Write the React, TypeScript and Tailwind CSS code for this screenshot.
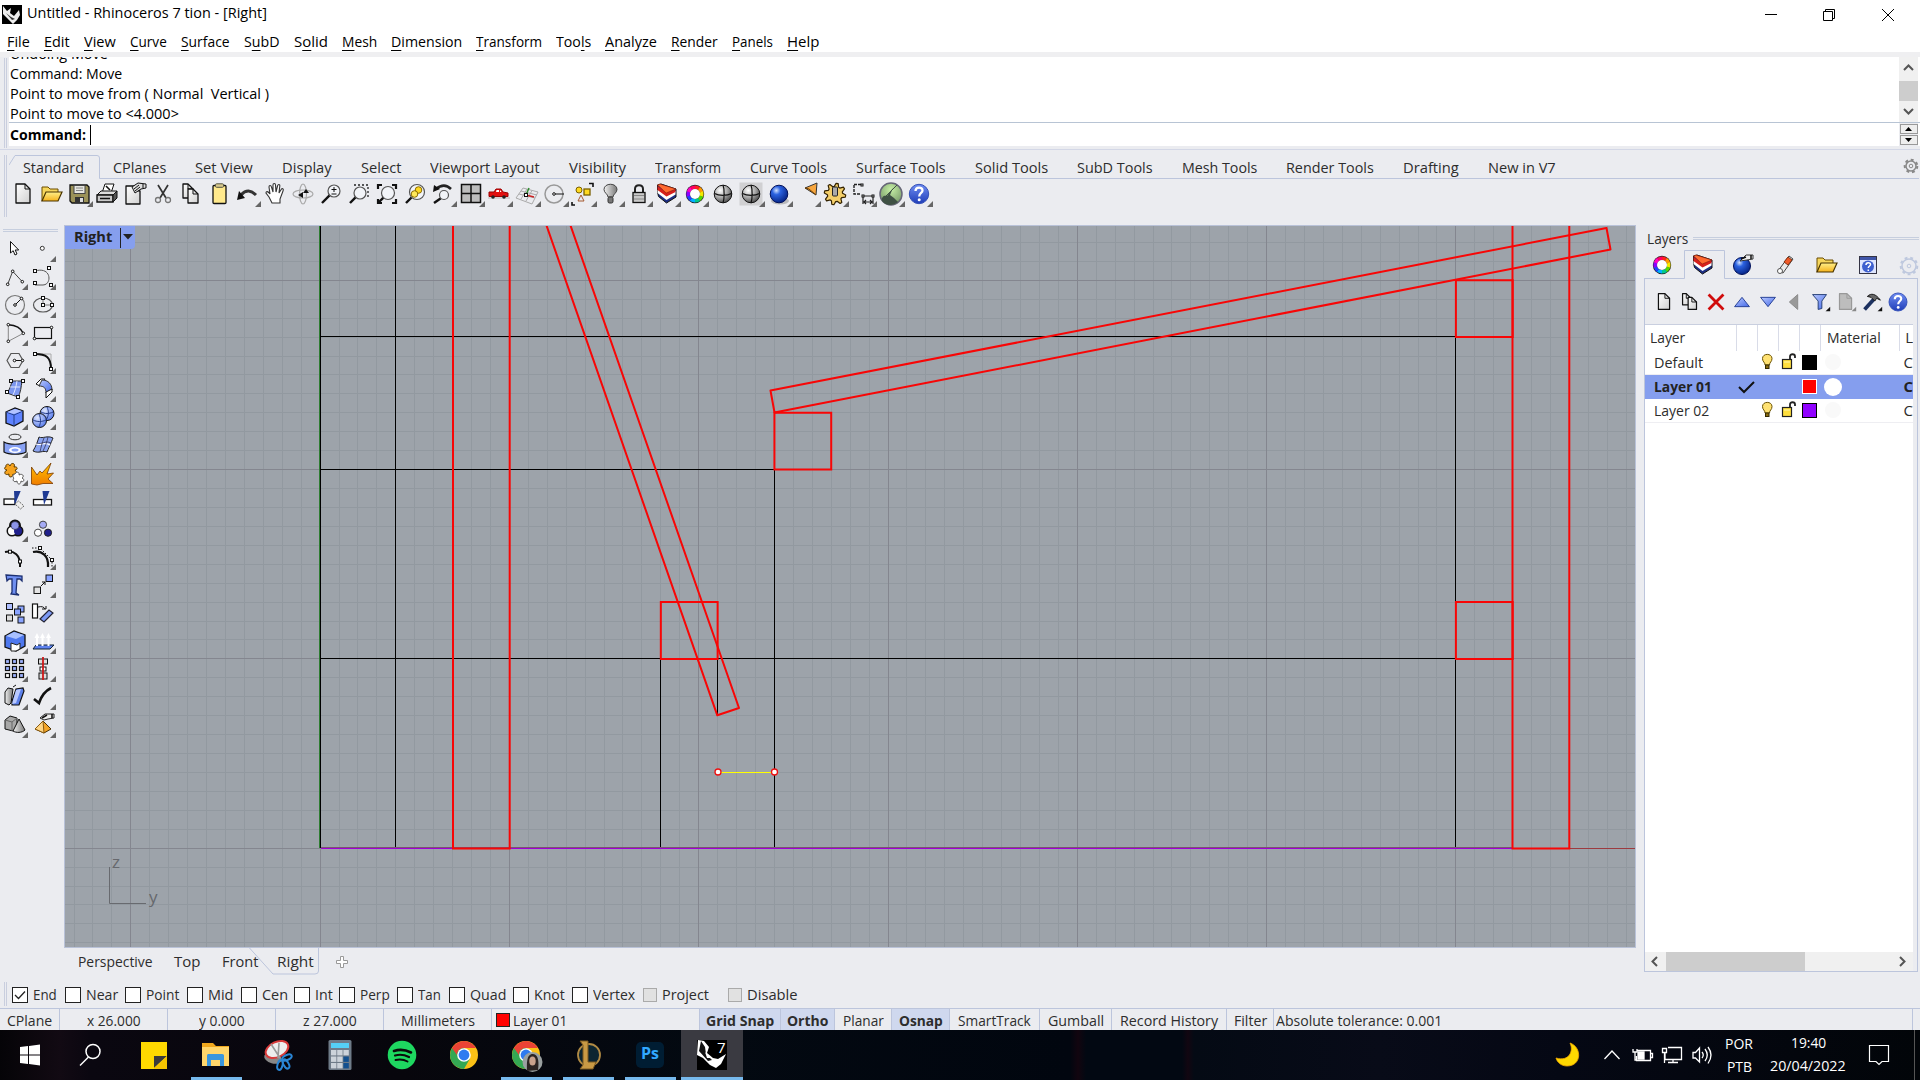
import React, { useLayoutEffect, useRef, useState } from "react";

/* Text squeezed to a given advance width, as the narrower system face would set it. */
function Fit({ w, className = "", children }: { w: number; className?: string; children: React.ReactNode }) {
  const ref = useRef<HTMLSpanElement>(null);
  const [s, setS] = useState(1);
  useLayoutEffect(() => {
    if (ref.current && ref.current.offsetWidth) setS(w / ref.current.offsetWidth);
  }, [w]);
  return (
    <span className="inline-block shrink-0 whitespace-pre" style={{ width: w }}>
      <span ref={ref} className={"inline-block origin-left " + className} style={{ transform: `scaleX(${s})` }}>
        {children}
      </span>
    </span>
  );
}

const K = "#111";
const P = ({ d, f = "none", s = K, w = 1, ...r }: any) => <path d={d} fill={f} stroke={s} strokeWidth={w} {...r} />;
const Sq = ({ x, y, z = 3, f = "#fff" }: any) => (
  <rect x={x - z / 2} y={y - z / 2} width={z} height={z} fill={f} stroke={K} />
);
const Dot = ({ x, y }: any) => <circle cx={x} cy={y} r={1.3} fill="#fff" stroke={K} />;
const Fly = ({ c = "#666" }: any) => <path d="M28 21V27H22Z" fill={c} />;

function Cell({ children, fly, size = 28 }: { children: React.ReactNode; fly?: boolean; size?: number }) {
  return (
    <svg width={size} height={28} viewBox="0 0 28 28" className="shrink-0 overflow-visible">
      {children}
      {fly && <Fly />}
    </svg>
  );
}

function Defs() {
  return (
    <svg className="absolute h-0 w-0">
      <defs>
        <linearGradient id="page" x1="0" y1="0" x2="1" y2="1"><stop offset="0" stopColor="#fff" /><stop offset="1" stopColor="#d0d0d0" /></linearGradient>
        <linearGradient id="gold" x1="0" y1="0" x2="0" y2="1"><stop offset="0" stopColor="#fff08a" /><stop offset="1" stopColor="#f5b21c" /></linearGradient>
        <linearGradient id="fire" x1="0" y1="0" x2="0" y2="1"><stop offset="0" stopColor="#ffc400" /><stop offset="1" stopColor="#f07c00" /></linearGradient>
        <linearGradient id="blue" x1="0" y1="0" x2="1" y2="1"><stop offset="0" stopColor="#b9c9ff" /><stop offset="1" stopColor="#4469e8" /></linearGradient>
        <radialGradient id="bball" cx=".35" cy=".3" r=".8"><stop offset="0" stopColor="#cfe0ff" /><stop offset=".3" stopColor="#2b62e0" /><stop offset="1" stopColor="#001a78" /></radialGradient>
        <radialGradient id="lball" cx=".35" cy=".3" r=".8"><stop offset="0" stopColor="#dfe8ff" /><stop offset="1" stopColor="#4a70ea" /></radialGradient>
        <radialGradient id="gball" cx=".35" cy=".3" r=".8"><stop offset="0" stopColor="#fff" /><stop offset=".5" stopColor="#a8a8a8" /><stop offset="1" stopColor="#3c3c3c" /></radialGradient>
        <radialGradient id="green" cx=".5" cy=".3" r=".8"><stop offset="0" stopColor="#c5efa5" /><stop offset="1" stopColor="#6b8b5f" /></radialGradient>
        <linearGradient id="help" x1="0" y1="0" x2="0" y2="1"><stop offset="0" stopColor="#6f8df2" /><stop offset="1" stopColor="#1f3db8" /></linearGradient>
        <linearGradient id="grey" x1="0" y1="0" x2="1" y2="0"><stop offset="0" stopColor="#f2f2f2" /><stop offset="1" stopColor="#777" /></linearGradient>
      </defs>
    </svg>
  );
}

const Page = ({ x = 7, y = 4, w = 14, h = 19, f = "url(#page)", s = K }: any) => (
  <>
    <path d={`M${x} ${y}h${w - 5}l5 5v${h - 5}h-${w}Z`} fill={f} stroke={s} strokeWidth={1.3} strokeLinejoin="round" />
    <path d={`M${x + w - 5} ${y}v5h5`} fill="none" stroke={s} />
  </>
);
const Folder = () => (
  <>
    <P d="M5 21V7H11L13 9H21V12" f="#f6d65c" s="#6b4d00" />
    <P d="M5 21L9 12H25L21 21Z" f="url(#gold)" s="#4a3500" w={1.2} />
  </>
);
const Wheel = () => {
  const cs = ["#ff2020", "#ff9a00", "#f5e800", "#55d800", "#00c890", "#00b0ff", "#2040ff", "#8a00ff", "#ff00c8", "#ff0060"];
  return (
    <>
      <circle cx="14" cy="14" r="9.2" fill="#222" />
      {cs.map((c, i) => {
        const a = ((i * 36 - 90) * Math.PI) / 180, b = (((i + 1) * 36 - 88) * Math.PI) / 180;
        return <path key={c} fill="none" stroke={c} strokeWidth="3.6" d={`M${14 + 6.8 * Math.cos(a)} ${14 + 6.8 * Math.sin(a)}A6.8 6.8 0 0 1 ${14 + 6.8 * Math.cos(b)} ${14 + 6.8 * Math.sin(b)}`} />;
      })}
      <circle cx="14" cy="14" r="5" fill="#fff" />
    </>
  );
};
const LayerIcon = () => (
  <>
    <path d="M4.500 5V12L5.500 16.500L13.500 23L23 17V9L8 4Z" fill="#1c2f86" stroke="#111" />
    <path d="M4.500 10V13L13.500 20L22.500 14.500V11Z" fill="#fff" />
    <path d="M4.500 6V10L13.500 16.500L22.500 12V9.500L13 12Z" fill="#d6201c" />
    <path d="M4.500 5L7 4L23 9L13.200 13Z" fill="#ff6a30" stroke="#8a1a08" strokeWidth=".6" />
  </>
);
const Mag = ({ x = 17, y = 11, r = 6 }: any) => (
  <>
    <P d={`M${x - r * 0.7} ${y + r * 0.7}L5 23`} w={2.4} />
    <circle cx={x} cy={y} r={r} fill="#f4f6fa" fillOpacity=".8" stroke="#555" strokeWidth="1.2" />
  </>
);
const Help = () => (
  <>
    <circle cx="14" cy="14" r="9.7" fill="url(#help)" stroke="#3450b8" />
    <P d="M10.500 11C10.500 6.500 17.500 6.500 17.500 10.500C17.500 13 14.200 13 14.200 16.500" s="#fff" w={2.3} />
    <circle cx="14.200" cy="19.800" r="1.500" fill="#fff" />
  </>
);
const Ball = ({ f = "url(#gball)" }: any) => (
  <>
    <circle cx="14" cy="14" r="8.800" fill={f} stroke={K} />
    <P d="M5.500 13.500C10 16 18 16 22.500 13.500M14 5C15.500 9 15.500 19 14 23" w={1.2} />
  </>
);
const Gear = ({ s = "#888", f = "none", r = 6 }: any) => (
  <>
    <circle cx="14" cy="14" r={r} fill={f} stroke={s} strokeWidth="1.500" />
    <circle cx="14" cy="14" r={r + 1.3} fill="none" stroke={s} strokeWidth="2" strokeDasharray="2.900 2.830" />
    <circle cx="14" cy="14" r="1.800" fill="none" stroke={s} />
  </>
);
/* Yellow cog built from eight teeth around a disc. */
const Cog = () => {
  const pts = Array.from({ length: 32 }, (_, i) => {
    const r = i % 4 < 2 ? 10.8 : 7.6, a = (i * Math.PI) / 16 + 0.1;
    return `${(14 + r * Math.cos(a)).toFixed(1)} ${(14 + r * Math.sin(a)).toFixed(1)}`;
  });
  return (
    <>
      <path d={"M" + pts.join("L") + "Z"} fill="#f4cf6a" stroke="#332200" strokeWidth="1.200" strokeLinejoin="round" />
      <rect x="11.500" y="7" width="5" height="9" rx="1" fill="#aaa" stroke="#222" />
    </>
  );
};

const toolbar: [React.ReactNode, boolean][] = [
  [<Page />, false],
  [<Folder />, false],
  [<><P d="M5 5H22L24 7V23H7L5 21Z" f="#9b9258" w={1.300} /><rect x="9" y="5.500" width="11" height="8" fill="#e6e6e0" stroke="#444" /><rect x="10" y="17" width="9" height="6" fill="#333" /><rect x="15" y="18" width="3" height="4" fill="#ddd" /><P d="M11 8H18M11 10.500H18" s="#888" /></>, true],
  [<><P d="M9 13L12 4H21L18 13Z" f="#fff" /><P d="M4 15L8 11H24L21 15Z" f="#ddd" /><P d="M4 15H20V22H4Z" f="#c9c9c9" w={1.400} /><P d="M20 15L24 11V18L20 22Z" f="#555" /><P d="M7 18.500H17M13 6L17 10" w={1.600} /></>, false],
  [<><Page x={5} y={6} w={14} h={18} /><P d="M11 7L17 3L25 4V8L20 9L14 13Z" f="#ddd" /><P d="M13 9L18 5M14 11L19 7M22 4V8" /></>, false],
  [<><P d="M9 5L17 18M19 5L11 18" s="#333" w={1.700} /><circle cx="9" cy="20" r="2.500" fill="none" stroke="#777" strokeWidth="1.300" /><circle cx="19" cy="20" r="2.500" fill="none" stroke="#777" strokeWidth="1.300" /></>, false],
  [<><Page x={6} y={4} w={10} h={14} /><Page x={11} y={9} w={10} h={14} /></>, false],
  [<><rect x="8" y="5.500" width="13" height="18" rx="1" fill="#ffe98c" stroke={K} strokeWidth="1.300" /><rect x="10.500" y="3.800" width="8" height="3.500" rx="1" fill="#d8c98c" stroke="#554" /></>, false],
  [<><P d="M8 15C13 9.500 18 10 23 15" w={3} s="#333" /><path d="M4 20L6 11L12 18Z" fill="#111" /></>, true],
  [<><P d="M8 17L5 13C5 11 7 11 9 14L8 7C8 5 10 5 10.500 7L12 12L12 5C12 3 14.500 3 14.500 5L15 12L16.500 6C17 4 19 4 18.800 6L18 13L20.500 9C21.500 8 23 9 22 11L19 19V23H11Z" f="#fff" s="#333" w={1.100} /></>, false],
  [<><ellipse cx="14" cy="14" rx="10" ry="4" fill="none" stroke="#aaa" strokeWidth="1.200" /><ellipse cx="14" cy="14" rx="3.500" ry="10" fill="none" stroke="#aaa" strokeWidth="1.200" /><path d="M17 9L20 13H14ZM9 15L14 12V18Z" fill="#111" /></>, false],
  [<><Mag /><P d="M14.500 9.500H19.500M17 7V12M14.500 14H19.500" /></>, false],
  [<><P d="M9 5H23V19" s="#222" strokeDasharray="2 2" w={1.300} /><Mag x={15} y={13} r={6} /></>, false],
  [<><P d="M5 9V5H9M19 5H23V9M5 19V23H9M19 23H23V19" w={2.200} /><Mag x={15} y={13} r={6.500} /></>, false],
  [<><Mag x={16} y={12} r={7.500} /><circle cx="17.500" cy="10" r="3.300" fill="#ffd91f" stroke="#8a6a00" /><circle cx="13.500" cy="14" r="3.300" fill="#ffe85a" stroke="#8a6a00" /></>, false],
  [<><P d="M7 9C13 4 18 5 22 9" w={2.600} s="#222" /><path d="M4 12L5 5L11 9Z" fill="#111" /><Mag x={15} y={15} r={4.500} /></>, true],
  [<><rect x="4.500" y="4.500" width="19" height="18" fill="#bdbdbd" stroke={K} strokeWidth="1.500" /><P d="M14 4V23M4 13.500H24" w={1.500} /></>, true],
  [<><P d="M3 18H25" s="#bbb" /><P d="M4 16V12L9 12L11 9H16L18 12L23 13V16.500H4Z" f="#e21010" s="#9a0000" /><path d="M11.500 10H14V12H11ZM15 10L16.500 12H15Z" fill="#fff" /><circle cx="8" cy="17" r="1.800" fill="#222" /><circle cx="19" cy="17" r="1.800" fill="#222" /></>, true],
  [<><P d="M3 18L10 8L25 12L19 24ZM6 14L22 18M8 11L24 15M8 19L14 9M13 21L19 10.500" s="#aaa" /><P d="M13 15L16 8" s="#2a8a2a" w={1.500} /><P d="M13 15L21 17" s="#c22" w={1.500} /><Sq x={13} y={15} /></>, true],
  [<><circle cx="13" cy="14" r="9" fill="none" stroke="#999" strokeWidth="1.500" /><P d="M13 14H23" /><Dot x={13} y={14} /></>, true],
  [<><circle cx="10" cy="10" r="3" fill="#ffd91f" stroke="#7a6000" /><rect x="15" y="9" width="6" height="6" fill="#ffd91f" stroke="#7a6000" strokeWidth="1.300" /><P d="M12 15L15 21H9Z" s="#a55a30" /><P d="M20 3.500H24V7M3 22V25H6" w={1.600} /></>, true],
  [<><P d="M11 17C11 14 7 13 7 9.500C7 2.500 20 2.500 20 9.500C20 13 16 14 16 17Z" f="url(#grey)" s="#444" /><rect x="11" y="17" width="5" height="6" rx="1.500" fill="#777" stroke="#333" /></>, true],
  [<><P d="M10 13V9C10 4 18 4 18 9V13" s="#222" w={2} /><rect x="8" y="12.500" width="12" height="10" fill="#c9c9c9" stroke={K} strokeWidth="1.300" /><P d="M9 15.500H19M9 19H19" s="#888" /></>, true],
  [<LayerIcon />, true],
  [<Wheel />, true],
  [<Ball />, false],
  [<><rect x="2.500" y="2.500" width="23" height="23" fill="#d0d0d2" /><Ball /></>, true],
  [<><ellipse cx="15" cy="21" rx="9" ry="3.500" fill="#999" opacity=".6" /><circle cx="14" cy="14" r="8.800" fill="url(#bball)" stroke="#00105a" /></>, true],
  [<><P d="M12 8L24 3L23 15Z" f="#f7a63e" s="#333" /><P d="M12 8L16 9L23 15" s="#704000" /></>, true],
  [<Cog />, true],
  [<><P d="M5 5V14H11M5 4.500H13" s="#222" strokeDasharray="3 1" w={1.400} /><P d="M14 16V24M24 16V24M15 22H23M17 20L15 22L17 24M21 20L23 22L21 24M14 16H23" s="#222" w={1.200} /><Sq x={13} y={5} z={2} /><Sq x={14} y={16} z={2} /><Sq x={24} y={16} z={2} /></>, true],
  [<><circle cx="14" cy="14" r="11" fill="url(#green)" stroke="#667" strokeWidth="1.500" /><path d="M5 21C4 17 7 15 10 16L16 8L13 15L17 18L21 22C16 26 9 26 5 21Z" fill="#3f5144" /><P d="M9 16L20 5" s="#3f5144" /></>, true],
  [<Help />, true],
];

const sidebar: [React.ReactNode, boolean][] = [
  [<P d="M10.500 6.500V18L13.200 15.700L15 20L17 19L15.200 15H18.700Z" f="#fff" />, false],
  [<circle cx="14.300" cy="13.300" r="2" fill="#fff" stroke="#333" />, true],
  [<><P d="M7.700 21.300L12.700 8.300L22.300 18.700" s="#444" /><Dot x={7.700} y={21.300} /><Dot x={12.700} y={8.300} /><Dot x={22.300} y={18.700} /></>, true],
  [<><P d="M7 8C24 3 24 22 15 22H7" s="#555" /><Sq x={7} y={8} /><Sq x={21} y={5} /><Sq x={7} y={20} /><Sq x={23} y={22} /></>, true],
  [<><circle cx="15" cy="14" r="9.500" fill="none" stroke="#777" strokeWidth="1.200" /><P d="M15 14L21.500 7.500" /><Dot x={15} y={14} /><Dot x={21.500} y={7.500} /></>, true],
  [<><ellipse cx="15" cy="14" rx="9.500" ry="7" fill="none" stroke="#555" strokeWidth="1.200" /><P d="M15 7V14H24" s="#777" /><Sq x={15} y={7} /><Sq x={15} y={14} /><Sq x={24} y={14} /></>, true],
  [<><P d="M8.300 5.700V22.300L23.300 14.300" s="#888" /><P d="M8.300 5.700C16 6 21 9 23.300 14.300" w={1.400} /><Dot x={8.300} y={5.700} /><Dot x={8.300} y={22.300} /><Dot x={23.300} y={14.300} /></>, true],
  [<><rect x="6.500" y="8.500" width="17" height="11" fill="none" stroke={K} strokeWidth="1.200" /><Dot x={6.500} y={19.500} /><Dot x={23.500} y={8.500} /></>, true],
  [<><P d="M7 13.500L11 6.500H19L23 13.500L19 20.500H11Z" s="#555" w={1.200} /><P d="M14 13.500H22.500" /><Dot x={14.500} y={13.500} /><Dot x={22.500} y={13.500} /></>, true],
  [<><P d="M7 7H23V22" s="#aaa" /><P d="M7 7C18 7 23 10 23 22" w={2} /><Sq x={7} y={7} /><Sq x={23} y={22} /></>, true],
  [<><P d="M12 6L22 6C21 12 21 17 18 22L7 18C10 14 11 10 12 6Z" f="#7d97ee" s="#333" /><P d="M17 6C16 12 15 16 13 20M10 12H20" s="#dfe6ff" /><Sq x={11} y={6} /><Sq x={23} y={6} /><Sq x={7} y={17} /><Sq x={18} y={22} /></>, true],
  [<><P d="M8 9L13 4H17L12 11Z" f="#fff" /><P d="M14 5C20 5 24 9 24 15L18 18C18 13 16 11 11 11Z" f="url(#blue)" s="#333" /><P d="M18 17L24 14V17L18 23Z" f="#fff" /></>, true],
  [<><P d="M6 9L15 5L23 8V18L14 23L6 20Z" f="#5f83ff" w={1.300} /><P d="M6 9L14 12L23 8M14 12V23" s="#24408c" /><path d="M7 9L15 6L22 8L14 11Z" fill="#b3c3ff" /></>, true],
  [<><circle cx="19" cy="10.500" r="7" fill="url(#lball)" stroke={K} /><circle cx="11.500" cy="17.500" r="7" fill="url(#lball)" stroke={K} /><P d="M5 17C9 19 14 19 18 17M11 11C13 15 13 20 11 24M13 9C17 11 21 11 25 9M19 4C21 8 21 13 18 17" s="#223a8a" /></>, true],
  [<><ellipse cx="15" cy="6" rx="6" ry="2.800" fill="none" stroke="#333" /><P d="M4 11C9 14 21 14 26 11V21C21 24 9 24 4 21Z" f="#88a2f5" w={1.200} /><ellipse cx="15" cy="19" rx="6" ry="3" fill="#fff" /><ellipse cx="15" cy="19" rx="3.500" ry="1.500" fill="#88a2f5" /></>, true],
  [<><P d="M11 6C15 8 19 4 25 7C23 12 22 14 19 21C15 19 11 23 5 20C8 15 9 12 11 6Z" f="#8aa3f0" s="#222" /><P d="M8 13C13 15 17 10 22 14" s="#fff" w={1.300} /><P d="M16 7C14 12 13 16 12 21M20 6C19 11 17 16 15 20M9 12C14 14 17 9 23 12" s="#335" w={.8} /></>, true],
  [<><P d="M6 8C5 5 9 4 10 7C11 3 16 4 14 8C18 7 18 11 15 11C18 14 16 17 13 15C13 19 8 19 9 15C5 17 3 13 7 11C4 11 4 8 6 8Z" f="#f5a21d" s="#5a3a00" /><P d="M15 15C16 12 20 13 19 16C22 14 25 17 22 19C25 20 24 24 21 22C21 26 17 26 17 22C14 24 12 21 14 19C12 18 13 15 15 15Z" f="#fff" s="#555" /></>, true],
  [<path d="M3.500 25V8L9 16L12 12L14 14L23 4L19 15L25.500 14L20 20L25 24.500H15L9 26Z" fill="url(#fire)" stroke="#7a3b00" strokeWidth=".8" />, false],
  [<><rect x="4" y="12" width="11" height="5.500" fill="#fff" stroke={K} strokeWidth="1.300" /><path d="M14 4H20.700L14.700 18Z" fill="#1f3a93" /><P d="M15 17L18.500 14L24 19L20.500 22Z" f="#eee" s="#666" strokeDasharray="2 1" /></>, false],
  [<><rect x="5.500" y="12.500" width="18" height="5.500" fill="#fff" stroke={K} strokeWidth="1.300" /><path d="M14.500 4H21.500L16 18Z" fill="#1f3a93" /></>, false],
  [<><g stroke={K} strokeWidth="3"><circle cx="15" cy="10.500" r="4.500" /><circle cx="12" cy="16" r="4" /><circle cx="18" cy="16" r="4" /></g><circle cx="12" cy="16" r="4" fill="#fff" /><circle cx="18" cy="16" r="4" fill="#20208c" /><circle cx="15" cy="10.500" r="4" fill="#8d95e8" stroke="#223" strokeWidth=".6" /></>, true],
  [<><circle cx="15" cy="9.700" r="3.600" fill="#a5abf5" stroke="#444" /><circle cx="10" cy="17.700" r="3.600" fill="#fff" stroke="#444" /><circle cx="20" cy="17.700" r="3.600" fill="#20208c" stroke="#222" /></>, false],
  [<><P d="M5 9C14 7 21 12 20 24" w={2} /><Sq x={10} y={8.700} /><Sq x={20} y={18.500} /></>, false],
  [<><P d="M4 5H12L24 17V24" strokeDasharray="1.500 1.500" /><P d="M5 9C14 7 21 13 20 24" w={2.200} /><Sq x={12} y={5} /><Sq x={24} y={17} /></>, true],
  [<P d="M6 4L22 5V10L20 8H17L16 22L19 24L11 23L12 21L12 8H9L7 10Z" f="#6f8ff0" s="#1c2f70" w={1.300} />, false],
  [<><rect x="6" y="16" width="6.500" height="6.500" fill="#e4e4e4" stroke={K} /><rect x="18" y="4" width="6.500" height="6.500" fill="#8aa4ff" stroke={K} /><P d="M13 15L17 11M14 11H17V14" /></>, true],
  [<><rect x="6.500" y="4.500" width="6" height="6" fill="#aebeff" stroke={K} /><rect x="18" y="7" width="6" height="6" fill="#8aa4ff" stroke={K} /><rect x="14.500" y="10" width="6" height="6" fill="#8aa4ff" stroke={K} /><rect x="6.500" y="16" width="6" height="6" fill="#ddd" stroke={K} /><rect x="18" y="18" width="6" height="6" fill="#8aa4ff" stroke={K} /></>, false],
  [<><rect x="4.500" y="5" width="5" height="14" fill="#fff" stroke={K} strokeWidth="1.200" /><P d="M10 8C14 7 16 8 17 10M14 10H18V7" /><P d="M12 20L21 11L25 14L16 23Z" f="#7d9af5" s="#223" w={1.200} /></>, false],
  [<><P d="M5 9L14 4L25 8V19L16 24L5 20Z" f="#4e78ee" w={1.300} /><path d="M6 9L14 5L24 8L16 12Z" fill="#a9c0ff" /><P d="M11 24V16L17 18L20 16V22L16 24Z" f="#fff" s="#222" /></>, true],
  [<><P d="M5 22L8 18H26L22 22Z" f="#5f83f0" s="#123" /><P d="M9 19V9M14.500 19V9M20.500 19V9" s="#fff" w={2} /><path d="M6.500 11L9 6L11.500 11ZM12 11L14.500 6L17 11ZM18 11L20.500 6L23 11Z" fill="#fff" /></>, true],
  [<>{[5.500, 12.500, 19.500].map((y) => [5.500, 12.500, 19.500].map((x) => <rect key={x + "-" + y} x={x} y={y - 1} width="4" height="4" fill={x < 6 && y > 19 ? "#fff" : "#9db2ff"} stroke={K} strokeWidth="1.200" />))}</>, true],
  [<><rect x="10.500" y="4" width="9" height="5" fill="#ddd" stroke={K} /><rect x="12" y="12" width="6" height="4" fill="#fff" stroke={K} /><rect x="11" y="18" width="8" height="6" fill="#ddd" stroke={K} /><P d="M15 2V25" s="#d01818" w={1.800} /></>, true],
  [<><P d="M5 9L8 5L13 6L11 20L9 22L5 20Z" f="url(#grey)" /><P d="M12 18L16 6L23 5L24 8L19 22L12 22Z" f="#5c80ea" w={1.200} /><P d="M16 7L12 21L16 20L21 6Z" f="#b9c9ff" s="none" /><P d="M13 4L16 2" /></>, true],
  [<P d="M6 16L11 20C13 14 17 8 23 5" w={2.600} s="#111" />, true],
  [<><P d="M5 9L10 5L17 7V16L13 20L5 18Z" f="#a8a8a8" /><P d="M5 9L12 11L17 7M12 11V20" s="#666" /><P d="M13 20L19 8L25 19C22 22 16 22 13 20Z" f="url(#grey)" /></>, true],
  [<><P d="M12 7L17 3H26V7L20 8L16 9Z" f="#eee" s="#222" /><P d="M14 7L19 4M24 3V7" w={1.500} /><P d="M7 18L15 10L23 18L16 22Z" f="#f3a528" s="#4a3000" /><P d="M15 10L16 22L7 18Z" f="#ffd583" s="#8a5a10" /></>, true],
];

const menus: [string, number, number][] = [
  ["File", 0, 23], ["Edit", 0, 26], ["View", 0, 32], ["Curve", 0, 37], ["Surface", 0, 49], ["SubD", 1, 36], ["Solid", 1, 34], ["Mesh", 0, 35],
  ["Dimension", 0, 71], ["Transform", 0, 66], ["Tools", 3, 35], ["Analyze", 0, 52], ["Render", 0, 47], ["Panels", 0, 41], ["Help", 0, 32],
];
const tabs: [string, number][] = [
  ["Standard", 61], ["CPlanes", 53], ["Set View", 58], ["Display", 50], ["Select", 40], ["Viewport Layout", 110], ["Visibility", 57], ["Transform", 66],
  ["Curve Tools", 77], ["Surface Tools", 90], ["Solid Tools", 73], ["SubD Tools", 76], ["Mesh Tools", 75], ["Render Tools", 88], ["Drafting", 56], ["New in V7", 68],
];
/* label, label width, distance from this box to the next one */
const osnaps: [string, number, string][] = [
  ["End", 24, "w-[53px]"], ["Near", 32, "w-[60px]"], ["Point", 33, "w-[62px]"], ["Mid", 25, "w-[54px]"], ["Cen", 26, "w-[53px]"], ["Int", 18, "w-[45px]"],
  ["Perp", 30, "w-[58px]"], ["Tan", 23, "w-[52px]"], ["Quad", 36, "w-[64px]"], ["Knot", 31, "w-[59px]"], ["Vertex", 42, "w-[71px]"], ["Project", 47, "w-[85px]"], ["Disable", 51, "w-[85px]"],
];

function TitleBar() {
  return (
    <div className="flex h-6 items-center bg-white pl-[2px] pt-px text-black">
      <svg width="20" height="20" viewBox="0 0 20 20" className="mt-[5px]">
        <rect width="20" height="20" fill="#000" />
        <path d="M1 1L5 6L9 3L8 8L12 11L17 5L18 10L15 15L11 19L5 13L1 9Z" fill="#eee" />
        <path d="M4 8L10 15L13 14L9 12Z" fill="#333" />
      </svg>
      <div className="ml-[5px]"><Fit w={240}>Untitled - Rhinoceros 7 tion - [Right]</Fit></div>
      <svg width="130" height="14" viewBox="0 0 130 14" className="ml-auto mr-[26px] mt-[5px]" fill="none" stroke="#000">
        <path d="M1 6.500H13" /><path d="M59.500 3.500H68.500V12.500H59.500ZM61.500 3V1.500H70.500V10.500H69" /><path d="M118 1L130 13M130 1L118 13" />
      </svg>
    </div>
  );
}

function CommandArea() {
  return (
    <div className="flex h-[93px] border-b border-[#d3d7e6]">
      <div className="my-px ml-1 mr-[2px] w-[3px] border-x border-[#c9cede]" />
      <div className="mb-[3px] flex flex-1 flex-col bg-white text-black">
        <div className="flex h-[66px] overflow-hidden">
          <div className="-mt-[14px] flex flex-1 flex-col pl-px leading-5">
            <Fit w={98}>Undoing Move</Fit><Fit w={112}>Command: Move</Fit><Fit w={259}>Point to move from ( Normal  Vertical )</Fit><Fit w={169}>Point to move to &lt;4.000&gt;</Fit>
          </div>
          <div className="mr-[2px] flex w-[19px] flex-col bg-[#f0f0f0]">
            <svg width="19" height="24"><path d="M5 13L9.500 8.500L14 13" stroke="#555" strokeWidth="2" fill="none" /></svg>
            <div className="h-[21px] bg-[#cdcdcd]" />
            <svg width="19" height="21"><path d="M5 8L9.500 12.500L14 8" stroke="#555" strokeWidth="2" fill="none" /></svg>
          </div>
        </div>
        <div className="flex h-6 items-center border-t border-[#b8c4d4] pl-px">
          <Fit w={76} className="font-bold">Command:</Fit>
          <div className="ml-1 h-[20px] w-px bg-black" />
          <div className="ml-auto mr-[2px] flex h-[23px] w-[19px] flex-col gap-px bg-[#ebecf0] pl-px pt-px">
            <svg width="18" height="10"><rect x=".5" y=".5" width="17" height="9" fill="#eee" stroke="#999" /><path d="M5 7L8.500 3L12 7Z" /></svg>
            <svg width="18" height="10"><rect x=".5" y=".5" width="17" height="9" fill="#eee" stroke="#999" /><path d="M5 3L8.500 7L12 3Z" /></svg>
          </div>
        </div>
      </div>
    </div>
  );
}

function Toolbars() {
  return (
    <div className="flex h-[75px] pt-[5px]">
      <div className="mb-2 ml-1 w-[3px] border-x border-[#c9cede]" />
      <div className="flex flex-1 flex-col">
        <div className="relative flex h-6 items-end">
          <svg width="1910" height="24" className="absolute left-[2px] top-0"><path d="M0 10L6 .5H88Q90.500 .5 90.500 3V23.500H1910" fill="none" stroke="#bcc5dc" /></svg>
          <div className="flex gap-[29px] pl-4 leading-6">{tabs.map(([t, w]) => <Fit key={t} w={w}>{t}</Fit>)}</div>
          <svg width="22" height="22" viewBox="3 3 22 22" className="ml-auto -mr-[2px] mb-[2px]"><Gear r={5} /></svg>
        </div>
        <div className="flex pl-[2px] pt-px">{toolbar.map(([n, f], i) => <Cell key={i} fly={f}>{n}</Cell>)}</div>
      </div>
    </div>
  );
}

/* One model unit is G pixels; the origin is the foot of the green axis. */
const G = 18.93;
const gx = (n: number) => 255.1 + n * G;
const gy = (n: number) => 622.2 - n * G;
const box = (a: number, b: number, s: number) => `M${gx(a)} ${gy(b)}H${gx(a + s)}V${gy(b + s)}H${gx(a)}Z`;

function Viewport() {
  const xs = Array.from({ length: 83 }, (_, i) => i - 13).filter((n) => gx(n) > 0 && n <= 72);
  const ys = Array.from({ length: 39 }, (_, i) => i - 5);
  return (
    <div className="relative h-[723px] w-[1572px] overflow-hidden border border-[#b9c2d8] bg-[#9da3aa]">
      <svg width="1571" height="721" className="block">
        <g shapeRendering="crispEdges">
          {xs.map((n) => n % 10 !== 0 && <path key={n} d={`M${Math.floor(gx(n)) + .5} 0V721`} stroke="#9299a0" />)}
          {ys.map((n) => n % 10 !== 0 && <path key={n} d={`M0 ${Math.floor(gy(n)) + .5}H1571`} stroke="#9299a0" />)}
          {xs.map((n) => n % 10 === 0 && <path key={n} d={`M${Math.floor(gx(n)) + .5} 0V721`} stroke="#84868f" />)}
          {ys.map((n) => n % 10 === 0 && <path key={n} d={`M0 ${Math.floor(gy(n)) + .5}H1571`} stroke="#84868f" />)}
          <path d="M254.500 0V622" stroke="#2e7d32" />
          <path d="M255.500 0V622M330.500 0V622M255.500 110.500H1390.500V622M255.500 243.500H709.500V622M255.500 432.500H1390.500M595.500 432V622M652.500 432V489" stroke="#000" fill="none" />
          <path d="M1505 622.500H1571" stroke="#9c3b40" />
          <path d="M256 621.500H1448" stroke="#7a5570" />
          <path d="M256 622.500H1448" stroke="#a000d8" />
        </g>
        <g fill="none" stroke="#f80606" strokeWidth="2">
          <path d="M388 -5V622.500H444.700V-5M1447.500 -5V622.500H1504.300V-5" />
          <path d={box(18, 10, 3)} /><path d={box(24, 20, 3)} /><path d={box(60, 10, 3)} /><path d={box(60, 27, 3)} />
          <path d="M479.600 -6L652.300 489.300L674 482L503.600 -6" strokeLinejoin="round" />
          <path d="M709.500 186.500L705.500 164.500L1541.500 2L1545.500 23.500Z" strokeLinejoin="round" />
        </g>
        <path d="M653 546.500H710" stroke="#ff0" />
        <circle cx="653" cy="546" r="3" fill="#fff" stroke="#e11" strokeWidth="1.300" /><circle cx="709.500" cy="546" r="3" fill="#fff" stroke="#e11" strokeWidth="1.300" />
        <path d="M44.500 641V677.500H81" stroke="#686a6f" fill="none" />
      </svg>
      <div className="absolute left-0 top-0 flex h-[23px] w-[70px] items-center rounded-br bg-[#869fee] pl-[9px] text-[#222]">
        <div className="mb-[2px] flex"><Fit w={38} className="font-bold">Right</Fit></div>
        <div className="ml-[8px] h-5 w-px bg-[#222]" />
        <svg width="12" height="8" className="mb-px ml-px"><path d="M1 1H11L6 6.500Z" fill="#222" /></svg>
      </div>
      <span className="absolute left-[47px] top-[624px] text-[17px] leading-6 text-[#66686d]">z</span>
      <span className="absolute left-[84px] top-[659px] text-[17px] leading-6 text-[#66686d]">y</span>
    </div>
  );
}

function ViewTabs() {
  return (
    <div className="relative flex h-8 items-start pl-[14px] leading-[26px]">
      <svg width="72" height="28" className="absolute left-[185px] top-0"><path d="M.5 0L24 26H66Q69.500 26 69.500 23V0" stroke="#bcc5dc" fill="none" /></svg>
      <Fit w={75}>Perspective</Fit><div className="w-[21px]" /><Fit w={26}>Top</Fit><div className="w-[22px]" /><Fit w={36}>Front</Fit><div className="w-[19px]" /><Fit w={37}>Right</Fit>
      <svg width="12" height="12" className="ml-[22px] mt-[8px]"><path d="M4.500 .5H7.500V4.500H11.500V7.500H7.500V11.500H4.500V7.500H.5V4.500H4.500Z" fill="#fff" stroke="#999" /></svg>
    </div>
  );
}

const Bulb = () => (
  <svg width="21" height="20" viewBox="0 0 21 20"><path d="M8 13C8 10 5.500 10 5.500 6.500C5.500 1 15 1 15 6.500C15 10 12.500 10 12.500 13Z" fill="#ffe273" stroke="#6b5200" /><rect x="8.500" y="13" width="3.500" height="3.500" fill="#886a10" stroke="#332800" /></svg>
);
const Lock = () => (
  <svg width="21" height="20" viewBox="0 0 21 20"><path d="M12 8V4.500C12 1.500 17 1.500 17 4.500V6" fill="none" stroke="#222" strokeWidth="1.800" /><rect x="4.500" y="7.500" width="9" height="9" fill="#ffdf3e" stroke="#222" strokeWidth="1.200" /><path d="M6 10H12" stroke="#fff7b0" /></svg>
);

function LayerRow({ name, w, color, sel }: { name: string; w: number; color: string; sel?: boolean }) {
  return (
    <div className={"flex h-6 items-center overflow-hidden pb-px pl-[9px] " + (sel ? "bg-[#859eee] font-bold text-[#222]" : "border-b border-[#eeeef2]")}>
      <div className="flex w-[86px]"><Fit w={w}>{name}</Fit></div>
      <div className="flex w-[21px]">{sel && <svg width="20" height="16" viewBox="0 0 20 16"><path d="M2 8L7 13L17 3" fill="none" stroke="#111" strokeWidth="2" /></svg>}</div>
      <div className="w-[21px]">{!sel && <Bulb />}</div>
      <div className="w-[22px]">{!sel && <Lock />}</div>
      <div className={"ml-[3px] h-[15px] w-[15px] border " + (sel ? "border-white " : "border-black ") + color} />
      <div className="flex w-[34px] justify-center">
        <div className={"rounded-full " + (sel ? "h-[18px] w-[18px] bg-white" : "h-4 w-4 bg-[#f9f9f9]")} />
      </div>
      <div className="ml-[54px]">C</div>
    </div>
  );
}

const pageTabs: [React.ReactNode, string][] = [
  [<Wheel />, "ml-1 mr-[13px]"], [<LayerIcon />, "mr-[12px]"],
  [<><circle cx="13" cy="15" r="8.500" fill="url(#bball)" stroke="#00105a" /><P d="M11 10L17 4H24V8L18 9Z" f="#eee" s="#333" /><P d="M12 8L17 6M22 4V8" w={1.500} /></>, "mr-[14px]"],
  [<><P d="M7 20L18 5L22 8L12 22Z" f="#e9e9e9" s="#444" /><P d="M13 11L17 6L21 9L17 14Z" f="#f05a28" s="#803010" /><circle cx="9" cy="20" r="2.500" fill="#fff" stroke="#555" /></>, "mr-[13px]"],
  [<Folder />, "mr-[14px]"],
  [<><rect x="5.500" y="5.500" width="17" height="17" fill="#dfe6ff" stroke="#334" /><path d="M6 6H22V9H6Z" fill="#3f55a8" /><circle cx="14" cy="15.500" r="6" fill="#3e60d0" /><P d="M12 14C12 11 16.500 11 16.500 13.500C16.500 15 14.300 15 14.300 17M14.300 18.500V20" s="#fff" w={1.500} /></>, "mr-[13px]"],
  [<Gear s="#bec8de" r={7} />, "mt-[3px]"],
];
const layerTools: React.ReactNode[] = [
  <Page x={8} y={5} w={12} h={17} />, <><Page x={6} y={5} w={9} h={12} /><Page x={12} y={9} w={9} h={13} /></>,
  <P d="M6 6L22 22M22 6L6 22" s="#d00c0c" w={3} />,
  <P d="M14 9L22 19H6Z" f="url(#blue)" s="#203a90" />, <P d="M14 19L22 9H6Z" f="url(#blue)" s="#203a90" />, <P d="M9 14L18 6V22Z" f="#999" s="#888" />,
  <><P d="M6 6H21L16 13V21L12 22V13Z" f="url(#blue)" s="#203a70" /><path d="M25 19V24H20Z" fill="#111" /></>,
  <><Page x={7} y={5} w={13} h={17} f="#bdbdbd" s="#999" /><path d="M25 19V24H20Z" fill="#888" /></>,
  <><P d="M6 22L16 11" s="#1c3160" w={4} /><P d="M9 8C13 4 18 5 23 12L19 10L17 13L13 9Z" f="#666" s="#111" /><path d="M25 19V24H20Z" fill="#111" /></>,
  <Help />,
];

function LayersPanel() {
  return (
    <div className="flex w-[276px] flex-col">
      <div className="ml-[3px] mt-[3px] flex h-[20px] items-center">
        <Fit w={41}>Layers</Fit><div className="ml-[5px] mr-px mt-px h-[3px] flex-1 border-y border-[#c6cede]" />
      </div>
      <div className="relative mt-[2px] flex h-[29px] items-center">
        <svg width="276" height="29" className="absolute left-0 top-0"><path d="M0 28.500H40.500V.5H80.500V28.500H274" fill="none" stroke="#bcc5dc" /></svg>
        {pageTabs.map(([n, c], i) => <div key={i} className={"flex " + c}><Cell>{n}</Cell></div>)}
      </div>
      <div className="mr-[2px] flex h-[693px] flex-col border-x border-b border-[#bcc5dc]">
        <div className="flex h-[45px] items-center pl-[6px]">
          {layerTools.map((n, i) => <Cell key={i} size={26}>{n}</Cell>)}
        </div>
        <div className="mr-[4px] flex flex-1 flex-col overflow-hidden border-t border-[#c9cfdf] bg-white">
          <div className="flex h-[26px] leading-[25px]">
            <div className="flex w-[92px] pl-[5px]"><Fit w={35}>Layer</Fit></div>
            <div className="w-[21px] border-l border-[#d9dce8]" /><div className="w-[21px] border-l border-[#d9dce8]" /><div className="w-[21px] border-l border-[#d9dce8]" />
            <div className="w-[21px] border-l border-[#d9dce8]" />
            <div className="flex w-[80px] border-l border-[#d9dce8] pl-[6px]"><Fit w={54}>Material</Fit></div>
            <div className="border-l border-[#d9dce8] pl-[5px]">L</div>
          </div>
          <LayerRow name="Default" w={49} color="bg-black" />
          <LayerRow name="Layer 01" w={58} color="bg-[#f00]" sel />
          <LayerRow name="Layer 02" w={55} color="bg-[#9000ff]" />
          <div className="mt-auto flex h-[19px] bg-[#f0f0f0]">
            <svg width="21" height="19"><path d="M12 5L7.500 9.500L12 14" stroke="#555" strokeWidth="2" fill="none" /></svg>
            <div className="w-[139px] bg-[#cdcdcd]" />
            <svg width="21" height="19" className="ml-auto"><path d="M8 5L12.500 9.500L8 14" stroke="#555" strokeWidth="2" fill="none" /></svg>
          </div>
        </div>
      </div>
    </div>
  );
}

function OsnapBar() {
  return (
    <div className="flex h-7 items-center pl-[4px] pt-px">
      <div className="mb-[2px] mr-[5px] h-[24px] w-[3px] border-x border-[#c9cede]" />
      {osnaps.map(([t, w, c], i) => (
        <div key={t} className={"flex items-center " + c}>
          <div className={i > 10 ? "mr-[5px] h-[14px] w-[14px] border border-[#aaa] bg-[#e1e1e1]" : "mr-[5px] flex h-4 w-4 items-center justify-center border border-[#222] bg-white"}>
            {i === 0 && <svg width="14" height="12"><path d="M2 6L5.500 9.500L12 2.500" stroke="#222" strokeWidth="1.300" fill="none" /></svg>}
          </div>
          <Fit w={w}>{t}</Fit>
        </div>
      ))}
    </div>
  );
}

const status: [string, number, string][] = [
  ["CPlane", 45, "w-[60px] pl-[7px]"], ["x 26.000", 54, "w-[108px] pl-[27px]"], ["y 0.000", 46, "w-[108px] pl-[31px]"], ["z 27.000", 54, "w-[108px] pl-[27px]"], ["Millimeters", 74, "w-[108px] pl-[17px]"],
];
const toggles: [string, number, string, boolean][] = [
  ["Grid Snap", 68, "w-[81px] pl-[6px]", true], ["Ortho", 41, "w-[54px] pl-[6px]", true], ["Planar", 41, "w-[57px] pl-[8px]", false], ["Osnap", 44, "w-[58px] pl-[7px]", true], ["SmartTrack", 73, "w-[90px] pl-[8px]", false],
  ["Gumball", 56, "w-[72px] pl-[8px]", false], ["Record History", 98, "w-[115px] pl-[8px]", false], ["Filter", 33, "w-[47px] pl-[7px]", false],
];

function StatusBar() {
  return (
    <div className="flex h-[22px] border-t border-[#bcc5dc] leading-[22px]">
      {status.map(([t, w, c]) => <div key={t} className={"flex border-r border-[#bcc5dc] " + c}><Fit w={w}>{t}</Fit></div>)}
      <div className="flex w-[208px] border-r border-[#bcc5dc] pl-[4px]">
        <div className="mr-[3px] mt-[4px] h-[14px] w-[14px] border border-[#222] bg-[#f00]" /><Fit w={54}>Layer 01</Fit>
      </div>
      {toggles.map(([t, w, c, on]) => (
        <div key={t} className={"flex border-r border-[#bcc5dc] " + (on ? "bg-[#cfd8ee] font-bold " : "") + c}><Fit w={w}>{t}</Fit></div>
      ))}
      <div className="flex w-[639px] border-r border-[#bcc5dc] pl-[2px]"><Fit w={166}>Absolute tolerance: 0.001</Fit></div>
    </div>
  );
}

const Chrome = () => (
  <>
    <circle cx="17" cy="17" r="14" fill="#fbc116" />
    <path d="M4.900 10A14 14 0 0 0 17 31L23 20.500L17 17Z" fill="#34a853" />
    <path d="M4.900 10L11 20.500L17 17L17 10Z" fill="#34a853" /><path d="M4.900 10A14 14 0 0 1 29.100 10H17C13 10 10 13 10 17Z" fill="#ea4335" />
    <circle cx="17" cy="17" r="6.800" fill="#fff" /><circle cx="17" cy="17" r="5.400" fill="#2f7bf0" />
  </>
);

const apps: [React.ReactNode, "none" | "open" | "active"][] = [
  [<><path d="M4 4H30V31H4Z" fill="#ffd900" /><path d="M17 18H30L17 30Z" fill="#3b3b3b" /><path d="M17 30L30 18V31H17Z" fill="#f5c400" /></>, "none"],
  [<><path d="M3 5H14L17 8H30V28H3Z" fill="#f0a81e" /><path d="M3 9H30V28H3Z" fill="#ffd66b" /><path d="M8 28V18C8 16 9 16 10 16H23C25 16 25 17 25 18V28H21V22H12V28Z" fill="#3a96dd" /></>, "open"],
  [<><ellipse cx="12" cy="20" rx="9" ry="5.500" fill="#888" transform="rotate(15 12 20)" /><ellipse cx="16" cy="11.500" rx="12" ry="7.500" fill="#ededed" stroke="#d83a3a" strokeWidth="2" transform="rotate(-25 16 11.500)" /><path d="M10 6L19 20M18 5L17 20" stroke="#999" strokeWidth="1.600" /><ellipse cx="26" cy="19.500" rx="5" ry="2.500" fill="none" stroke="#2a86d6" strokeWidth="2" transform="rotate(-25 26 19.500)" /><ellipse cx="19" cy="27" rx="2.500" ry="5" fill="none" stroke="#2a86d6" strokeWidth="2" transform="rotate(15 19 27)" /><ellipse cx="25" cy="26" rx="2.500" ry="5" fill="none" stroke="#2a86d6" strokeWidth="2" transform="rotate(-30 25 26)" /></>, "none"],
  [<><rect x="5.500" y="2" width="23" height="30" rx="1.500" fill="#6e7b88" /><rect x="8" y="5" width="18" height="5" fill="#55d0f5" />{[12, 18.500, 25].map((y) => [8, 14.200, 20.400].map((x) => <rect key={x + "_" + y} x={x} y={y} width="5.400" height="5.400" fill={x > 20 && y > 13 ? "#12508f" : "#ccd3da"} />))}</>, "none"],
  [<><circle cx="17" cy="17" r="14.300" fill="#1ed760" /><g fill="none" stroke="#0a0a0a" strokeLinecap="round"><path d="M9 13C15 11 21 12 26 14.500" strokeWidth="2.600" /><path d="M10 17.500C15 16 20 17 24 19" strokeWidth="2.200" /><path d="M10.500 22C15 21 19 21.500 22.500 23.500" strokeWidth="1.900" /></g></>, "none"],
  [<Chrome />, "none"],
  [<><Chrome /><circle cx="23.500" cy="24" r="10" fill="#9aa0a0" /><path d="M18 33C18 26 17 16 24 16C30 16 30 26 29 32Z" fill="#2b2422" /><ellipse cx="23.500" cy="23" rx="3.200" ry="4.500" fill="#c9a28c" /></>, "open"],
  [<><circle cx="18" cy="17" r="11" fill="#0c2531" stroke="#b08a44" strokeWidth="1.800" /><path d="M9 3H17V24H25L22 31H9L12 27V7Z" fill="#c99a45" stroke="#7a5820" /></>, "open"],
  [<rect x="3" y="4" width="28" height="26" rx="5" fill="#001d33" />, "open"],
  [<><rect x="2" y="2" width="30" height="30" fill="#000" /><path d="M3 2L9 3L14 9L12 15L18 20L23 21L31 16L26 26L21 30L15 27L8 20L2 17Z" fill="#fff" /><path d="M6 3L4 13L13 23L17 22L11 16L10 9Z" fill="#111" /><path d="M10 14L16 20L12 20Z" fill="#fff" /></>, "active"],
];

function Taskbar() {
  return (
    <div className="flex h-[50px] items-stretch bg-[linear-gradient(90deg,#050407_0,#120a13_60px,#0a0710_90px,#07060c_400px,#030911_700px,#01060f_1070px,#12050f_1078px,#020812_1086px,#020812_1182px,#120611_1188px,#040a14_1194px,#080b18_1380px,#050814_1560px,#020509_1920px)] text-[15px] text-white">
      <svg width="60" height="50"><path d="M20 17L28 16V24.500H20ZM29 15.900L40 14.500V24.500H29ZM20 25.500H28V34L20 33ZM29 25.500H40V35.500L29 34.100Z" fill="#fff" /></svg>
      <svg width="63" height="50"><circle cx="33" cy="21.500" r="7" fill="none" stroke="#fff" strokeWidth="1.500" /><path d="M28.500 27L20 35.500" stroke="#fff" strokeWidth="1.500" /></svg>
      {apps.map(([n, st], i) => (
        <div key={i} className={"relative flex w-[62px] flex-col items-center pt-2 " + (st === "active" ? "bg-[#3a3a41]" : "")}>
          <svg width="34" height="34" viewBox="0 0 34 34" className="shrink-0">{n}</svg>
          {i === 8 && <span className="absolute top-[13px] text-[16px] font-bold leading-5 text-[#31a8ff]">Ps</span>}
          {i === 9 && <span className="absolute left-[36px] top-[9px] text-[15px] leading-4 text-white">7</span>}
          {st !== "none" && <div className={"mt-auto h-[3px] shrink-0 bg-[#76b9ed] " + (st === "active" ? "w-full" : "w-[51px]")} />}
        </div>
      ))}
      <div className="ml-auto flex items-center">
        <svg width="200" height="50" viewBox="1530 1030 200 50" fill="none" stroke="#fff" strokeWidth="1.300">
          <path d="M1570 1043C1582 1047 1582 1066 1567 1066C1561 1066 1557 1062 1556 1058C1569 1062 1574 1051 1570 1043Z" fill="#ffd800" stroke="#f5a800" strokeWidth=".8" />
          <path d="M1604.500 1059L1612 1051L1619.500 1059" />
          <path d="M1637 1050.500H1650.500V1060.500H1636.500V1056M1651 1053.500H1652.500V1057.500H1651M1633 1049V1052H1637V1049M1635 1052V1060H1637" /><path d="M1638 1052H1644V1059H1638Z" fill="#fff" />
          <path d="M1668 1047.500H1681.500V1059.500H1665V1053M1673 1060V1062.500M1668 1062.500H1678M1662.500 1048.500H1666.500V1052.500H1662.500ZM1664.500 1053V1063" />
          <path d="M1693 1052.500H1695.500L1699.500 1048V1062L1695.500 1058H1693ZM1702 1052Q1704.500 1055 1702 1058M1705 1049Q1709.500 1055 1705 1061M1708 1047Q1714 1055 1708 1063.500" />
        </svg>
      </div>
      <div className="-ml-[5px] flex w-[28px] flex-col items-center pt-[2px] leading-[23px]"><Fit w={28}>POR</Fit><Fit w={25}>PTB</Fit></div>
      <div className="ml-[17px] flex w-[76px] flex-col items-center pt-px leading-[23px]"><Fit w={35}>19:40</Fit><Fit w={76}>20/04/2022</Fit></div>
      <svg width="74" height="50" className="shrink-0"><path d="M23.500 15.500H42.500V31.500H36L33 34.500L30 31.500H23.500Z" fill="none" stroke="#fff" strokeWidth="1.200" /><path d="M68.500 0V50" stroke="#555" /></svg>
    </div>
  );
}

export default function App() {
  return (
    <div className="flex h-[1080px] w-[1920px] flex-col overflow-hidden bg-[#ebecf0] font-['Open_Sans','Noto_Sans',sans-serif] text-[15px] text-[#2d2d2d]">
      <Defs />
      <TitleBar />
      <div className="flex h-7 gap-[14px] bg-white pl-[7px] pt-[5px] leading-[24px] text-black">
        {menus.map(([t, u, w]) => (
          <Fit key={t} w={w}>{t.slice(0, u)}<span className="underline underline-offset-[3px]">{t[u]}</span>{t.slice(u + 1)}</Fit>
        ))}
      </div>
      <div className="h-[5px] bg-[#efeff1]" />
      <CommandArea />
      <Toolbars />
      <div className="flex h-[755px]">
        <div className="flex w-16 flex-col pl-[3px] pr-[6px] pt-[4px]">
          <div className="h-[3px] border-y border-[#c6cede]" />
          <div className="-ml-[3px] mt-[3px] grid w-14 grid-cols-2">{sidebar.map(([n, f], i) => <Cell key={i} fly={f}>{n}</Cell>)}</div>
        </div>
        <div className="mr-[8px] flex w-[1572px] flex-col"><Viewport /><ViewTabs /></div>
        <LayersPanel />
      </div>
      <OsnapBar />
      <StatusBar />
      <Taskbar />
    </div>
  );
}
